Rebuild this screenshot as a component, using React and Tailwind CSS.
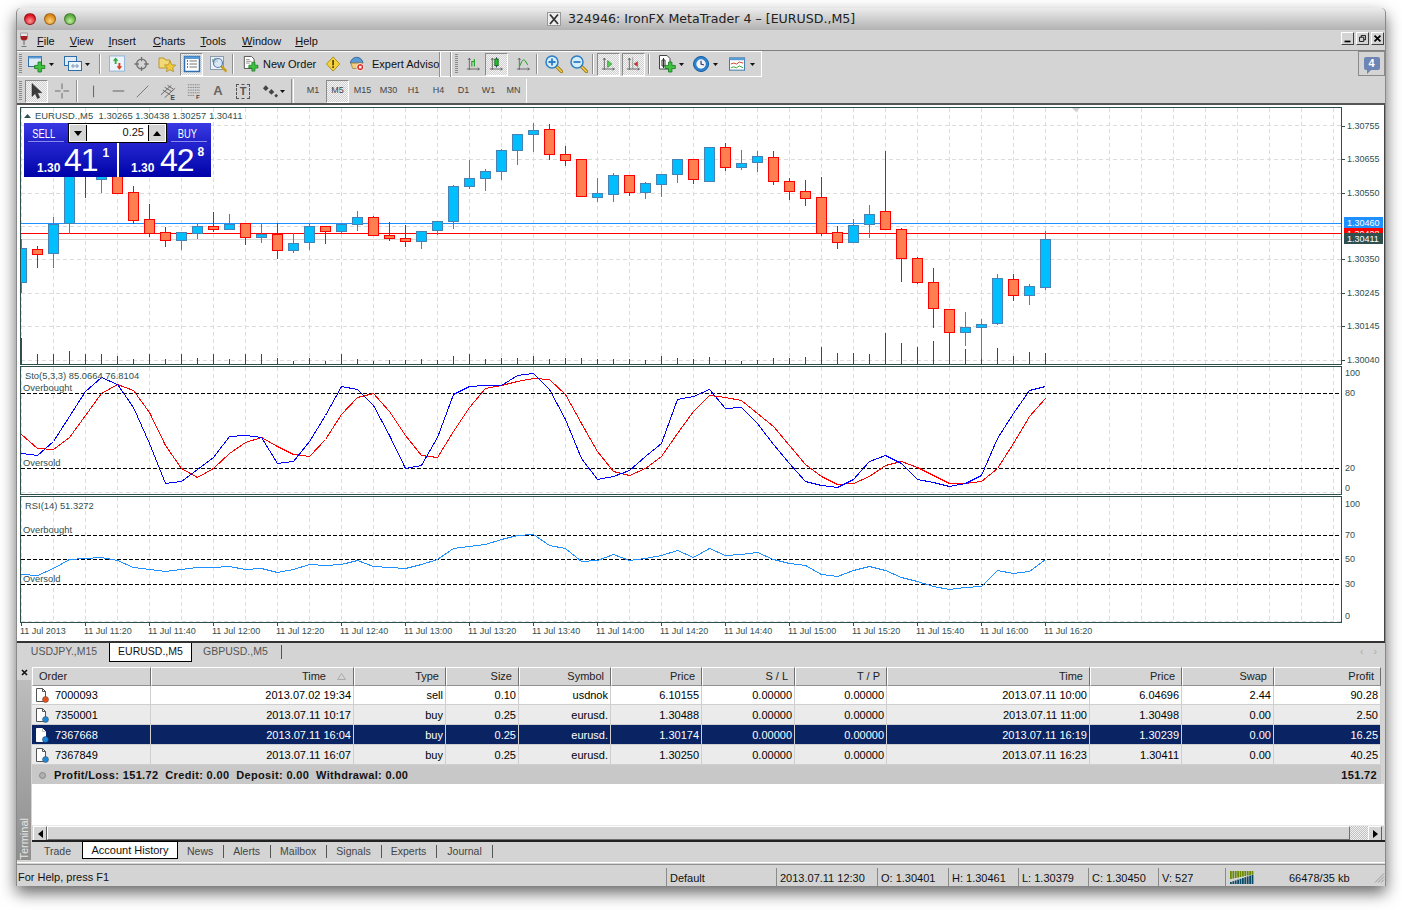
import React from 'react';

// chart data, measured in 3x crop units (y = 105 + z / 3)
const CANDLES = [
  [400, 430, 532, 560, 'b'], [420, 433, 448, 485, 'r'], [333, 357, 445, 485, 'b'], [150, 180, 355, 385, 'b'],
  [170, 180, 210, 275, 'r'], [160, 190, 222, 260, 'b'], [180, 190, 263, 263, 'r'], [240, 262, 346, 355, 'r'],
  [295, 343, 383, 392, 'r'], [363, 382, 406, 422, 'r'], [382, 382, 406, 432, 'b'], [352, 364, 385, 398, 'b'],
  [318, 364, 373, 378, 'r'], [324, 356, 373, 373, 'b'], [355, 355, 397, 418, 'r'], [355, 388, 397, 410, 'b'],
  [352, 388, 436, 458, 'r'], [380, 415, 436, 440, 'b'], [355, 364, 412, 433, 'b'], [360, 364, 379, 413, 'r'],
  [352, 358, 379, 380, 'b'], [316, 337, 358, 375, 'b'], [330, 337, 391, 391, 'r'], [348, 391, 400, 404, 'r'],
  [357, 400, 409, 422, 'r'], [376, 379, 409, 428, 'b'], [345, 349, 376, 386, 'b'], [237, 244, 349, 368, 'b'],
  [163, 220, 244, 250, 'b'], [190, 199, 220, 255, 'b'], [130, 136, 199, 222, 'b'], [88, 88, 136, 177, 'b'],
  [52, 76, 88, 138, 'b'], [55, 73, 148, 162, 'r'], [120, 148, 166, 180, 'r'], [163, 163, 274, 274, 'r'],
  [216, 265, 277, 288, 'b'], [202, 211, 268, 288, 'b'], [211, 211, 262, 270, 'r'], [228, 235, 262, 278, 'b'],
  [208, 208, 238, 272, 'b'], [163, 163, 208, 230, 'b'], [163, 163, 223, 233, 'r'], [123, 127, 227, 227, 'b'],
  [112, 127, 187, 194, 'r'], [132, 175, 187, 191, 'b'], [136, 154, 172, 197, 'b'], [136, 157, 229, 236, 'r'],
  [217, 229, 259, 281, 'r'], [222, 259, 280, 299, 'r'], [213, 277, 385, 389, 'r'], [360, 382, 412, 428, 'r'],
  [340, 361, 412, 412, 'b'], [297, 328, 358, 395, 'b'], [135, 319, 373, 373, 'r'], [367, 373, 460, 527, 'r'],
  [454, 460, 532, 535, 'r'], [487, 532, 610, 665, 'r'], [610, 613, 682, 718, 'r'], [618, 667, 682, 720, 'b'],
  [640, 658, 667, 760, 'b'], [505, 520, 655, 658, 'b'], [505, 523, 571, 585, 'r'], [535, 544, 571, 597, 'b'],
  [375, 403, 547, 553, 'b'],
];

const VOLUMES = [
  695, 745, 745, 735, 745, 745, 750, 760, 745, 760, 745, 755, 745, 760, 745, 745, 755, 765, 755, 765, 745, 760,
  765, 762, 762, 760, 762, 750, 745, 760, 755, 755, 750, 758, 755, 755, 758, 758, 760, 762, 750, 755, 758, 753,
  762, 765, 762, 755, 755, 753, 723, 742, 742, 745, 681, 711, 723, 705, 680, 729, 760, 727, 750, 738, 742,
];

const seg = (a, b, c) => [
  ...a.map(z => 360 + z / 3),
  ...b.map(z => 366 + z / 3),
  ...c.map(z => 366 + z / 3),
];

const STO_MAIN = seg(
  [280, 286, 243, 168, 92, 50, 72, 140, 250, 368, 364, 328, 290, 229, 226, 232, 310, 303, 242, 165, 78, 87, 135, 225],
  [305, 296, 212, 85, 61, 58, 56, 26, 21, 70, 160, 277, 340, 331, 313, 270, 230, 98, 90, 70, 127],
  [124, 172, 235, 290, 345, 357, 364, 338, 285, 268, 290, 340, 348, 360, 350, 326, 215, 140, 72, 61],
);
const STO_SIGNAL = seg(
  [222, 265, 268, 232, 165, 100, 73, 90, 155, 255, 325, 351, 325, 280, 245, 232, 258, 283, 287, 238, 163, 110, 100, 153],
  [208, 268, 272, 195, 122, 66, 57, 45, 35, 40, 83, 170, 256, 316, 328, 307, 270, 200, 135, 86, 93],
  [103, 140, 180, 238, 295, 331, 355, 352, 329, 298, 284, 302, 327, 350, 351, 345, 305, 232, 150, 96],
);
const RSI = seg(
  [643, 646, 625, 596, 595, 592, 600, 622, 628, 633, 628, 622, 622, 619, 628, 625, 637, 628, 613, 616, 611, 601, 619, 622],
  [606, 594, 580, 547, 541, 535, 520, 508, 505, 538, 547, 586, 581, 565, 582, 575, 568, 553, 574, 547, 568],
  [565, 559, 580, 592, 598, 625, 631, 613, 601, 613, 634, 646, 661, 670, 664, 661, 613, 622, 616, 580],
);

const GRID_X = Array.from({ length: 42 }, (_, i) => 21.5 + 32 * i);
const TIMES = ['11 Jul 2013', '11 Jul 11:20', '11 Jul 11:40', '11 Jul 12:00', '11 Jul 12:20', '11 Jul 12:40', '11 Jul 13:00', '11 Jul 13:20', '11 Jul 13:40', '11 Jul 14:00', '11 Jul 14:20', '11 Jul 14:40', '11 Jul 15:00', '11 Jul 15:20', '11 Jul 15:40', '11 Jul 16:00', '11 Jul 16:20'];
const PRICES = [[126, '1.30755'], [159, '1.30655'], [193, '1.30550'], [259, '1.30350'], [293, '1.30245'], [326, '1.30145'], [360, '1.30040']];

const COLS = 'grid grid-cols-[119px_203px_92px_73px_92px_91px_93px_92px_203px_92px_92px_107px]';
const ORDERS = [
  { id: '7000093', open: '2013.07.02 19:34', type: 'sell', size: '0.10', sym: 'usdnok', price: '6.10155', close: '2013.07.11 10:00', cp: '6.04696', swap: '2.44', profit: '90.28', dot: '#e8501a', bg: 'bg-white' },
  { id: '7350001', open: '2013.07.11 10:17', type: 'buy', size: '0.25', sym: 'eurusd.', price: '1.30488', close: '2013.07.11 11:00', cp: '1.30498', swap: '0.00', profit: '2.50', dot: '#1e88d8', bg: 'bg-[#ebebeb]' },
  { id: '7367668', open: '2013.07.11 16:04', type: 'buy', size: '0.25', sym: 'eurusd.', price: '1.30174', close: '2013.07.11 16:19', cp: '1.30239', swap: '0.00', profit: '16.25', dot: '#1e88d8', bg: 'bg-[#0a2463] text-white', sel: true },
  { id: '7367849', open: '2013.07.11 16:07', type: 'buy', size: '0.25', sym: 'eurusd.', price: '1.30250', close: '2013.07.11 16:23', cp: '1.30411', swap: '0.00', profit: '40.25', dot: '#1e88d8', bg: 'bg-[#ebebeb]' },
];

const Ic = ({ className = '', children }) => (
  <svg viewBox="0 0 18 18" className={`block shrink-0 h-[18px] w-[18px] ${className}`}>{children}</svg>
);
const Plus = ({ x = 0, y = 0 }) => (
  <path transform={`translate(${x} ${y})`} d="M9 7h3.4v3.4h3.4v3.2h-3.4V17H9v-3.4H5.6v-3.2H9z" fill="#3fc23f" stroke="#15761c" strokeWidth=".8" />
);
const Axes = () => (
  <path d="M4 2v14M1 15h15M4 2l-1.5 2M4 2l1.5 2M16 15l-2-1.500M16 15l-2 1.500" fill="none" stroke="#555" strokeWidth="1" />
);
const Magnifier = ({ plus }) => (
  <>
    <path d="M11 11l5.500 5.500" stroke="#a07a10" strokeWidth="3.200" strokeLinecap="round" />
    <path d="M11 11l5.500 5.500" stroke="#f0d050" strokeWidth="1.500" strokeLinecap="round" />
    <circle cx="7" cy="7" r="6" fill="#d5ecfb" stroke="#2c7fc4" strokeWidth="1.500" />
    <path d={plus ? 'M3.500 7h7M7 3.500v7' : 'M3.500 7h7'} stroke="#2c7fc4" strokeWidth="1.800" />
  </>
);
const Arrow = ({ className = '' }) => (
  <svg viewBox="0 0 5 3" className={`block shrink-0 h-[3px] w-[5px] ${className}`}><path d="M0 0h5L2.500 3z" fill="#111" /></svg>
);
const Grip = ({ className = '' }) => (
  <div className={`h-[20px] w-[3px] shrink-0 bg-[repeating-linear-gradient(#8a8a8a_0_1px,transparent_1px_2px)] ${className}`} />
);
const Sep = ({ className = '' }) => (
  <div className={`h-[20px] w-[2px] shrink-0 border-l border-r border-l-[#8f8f8f] border-r-white ${className}`} />
);
const PRESSED = 'flex h-[23px] w-[23px] shrink-0 items-center justify-center border border-t-[#8a8a8a] border-l-[#8a8a8a] border-r-white border-b-white bg-[repeating-conic-gradient(#d0d0d0_0_25%,#f4f4f4_0_50%)] bg-size-[2px_2px]';

const TrafficLight = ({ className }) => (
  <div className={`h-[12px] w-[12px] rounded-full border border-black/30 ${className}`} />
);

function TitleBar() {
  return (
    <div className="relative flex h-[22px] shrink-0 items-center rounded-t-[5px] bg-gradient-to-b from-[#ececec] to-[#b2b2b2] pl-[7px]">
      <div className="flex gap-[8px]">
        <TrafficLight className="bg-[radial-gradient(circle_at_50%_70%,#ff9a9a,#d8101c_70%)]" />
        <TrafficLight className="bg-[radial-gradient(circle_at_50%_70%,#ffd27a,#d88412_70%)]" />
        <TrafficLight className="bg-[radial-gradient(circle_at_50%_70%,#c4ee9c,#55a83a_70%)]" />
      </div>
      <svg viewBox="0 0 14 14" className="ml-[471px] block h-[14px] w-[14px] shrink-0">
        <rect x=".5" y=".5" width="13" height="13" fill="#eee" stroke="#999" />
        <path d="M3 2.500l8 9.500M11 2.500l-8 9.500" stroke="#333" strokeWidth="1.800" />
      </svg>
      <div className="ml-[7px] whitespace-nowrap pt-[1px] font-['DejaVu_Sans',sans-serif] text-[12.600px] text-[#222]">324946: IronFX MetaTrader 4 – [EURUSD.,M5]</div>
    </div>
  );
}

const MENU = [['F', 'ile', 'ml-[8px]'], ['V', 'iew', 'ml-[15px]'], ['I', 'nsert', 'ml-[15px]'], ['C', 'harts', 'ml-[17px]'], ['T', 'ools', 'ml-[15px]'], ['W', 'indow', 'ml-[16px]'], ['H', 'elp', 'ml-[14px]']];

function MenuBar() {
  return (
    <div className="flex h-[20px] shrink-0 items-center bg-[#d4d4d4] text-[11px] text-[#111]">
      <svg viewBox="0 0 10 16" className="ml-[2px] block h-[16px] w-[10px] shrink-0">
        <path d="M1.500 1h7v4.500c0 2-1.500 3-3.500 3s-3.500-1-3.500-3z" fill="#e6e6e6" stroke="#888" strokeWidth=".7" />
        <path d="M1.700 4h6.600v1.500c0 2-1.400 2.800-3.300 2.800s-3.300-.8-3.300-2.800z" fill="#a81c20" />
        <path d="M5 8.500V13M2.500 14.500h5" stroke="#777" strokeWidth="1.200" />
      </svg>
      <div className="flex pt-[2px]">
        {MENU.map(([first, rest, ml]) => (
          <span key={first} className={ml}><span className="underline">{first}</span>{rest}</span>
        ))}
      </div>
      <div className="ml-auto mr-[1px] mt-[-3px] flex gap-[2px]">
        {['M3 10h7', 'M3 5h5v5H3zM5 5V3h5v5H8', 'M3 3l7 7M10 3l-7 7'].map((d, i) => (
          <div key={d} className="h-[13px] w-[13px] border border-t-white border-l-white border-r-[#404040] border-b-[#404040] bg-[#d4d4d4]">
            <svg viewBox="0 0 13 13" className="block h-[11px] w-[11px]">
              <path d={d} fill="none" stroke="#000" strokeWidth={i === 1 ? 1 : 2} />
            </svg>
          </div>
        ))}
      </div>
    </div>
  );
}

function ToolbarOne() {
  return (
    <div className="flex h-[27px] shrink-0 border-t border-t-[#808080] bg-[#d4d4d4]">
      <div className="flex h-[26px] w-[745px] shrink-0 items-center border-t border-t-white border-r border-r-white border-b border-b-white text-[11px] text-[#111]">
        <Grip className="ml-[2px]" />
        <Ic className="ml-[6px]">
          <rect x=".5" y="1.500" width="13" height="10" fill="#dfeaf6" stroke="#2f6ea8" />
          <rect x=".5" y="1.500" width="13" height="2" fill="#5b9bd5" />
          <Plus x="1" />
        </Ic>
        <Arrow className="ml-[3px]" />
        <Ic className="ml-[10px]">
          <rect x=".5" y="1.500" width="12" height="9" fill="#dfeaf6" stroke="#2f6ea8" />
          <rect x="4.500" y="6.500" width="13" height="9" fill="#eef4fb" stroke="#2f6ea8" />
          <path d="M7 11h8M9 9v4M13 9v4" stroke="#7a9bc0" />
        </Ic>
        <Arrow className="ml-[3px]" />
        <Sep className="ml-[9px]" />
        <Ic className="ml-[8px] w-[17px]!">
          <rect x=".5" y=".5" width="16" height="16" fill="#eef4fb" stroke="#8fb4d8" />
          <path d="M7 2l3 3.500H8V9H6V5.500H4z" fill="#2fae3a" />
          <path d="M11 15l-3-3.500h2V8h2v3.500h2z" fill="#d83a22" />
        </Ic>
        <Ic className="ml-[8px] w-[16px]!">
          <circle cx="8.500" cy="9" r="5.500" fill="none" stroke="#707070" strokeWidth="1.500" />
          <path d="M8.500 1v5M8.500 12v5M.5 9h5M11.500 9h5" stroke="#707070" strokeWidth="1.500" />
        </Ic>
        <Ic className="ml-[8px]">
          <path d="M1 3h5l1.500 2H12v8H1z" fill="#f3d87a" stroke="#b8962e" />
          <path d="M12 6l1.700 3.700 4 .4-3 2.700.9 4L12 14.700 8.400 16.800l.9-4-3-2.700 4-.4z" fill="#f2c93a" stroke="#a88a20" strokeWidth=".7" />
        </Ic>
        <div className={`ml-[4px] ${PRESSED}`}>
          <Ic>
            <rect x="1.500" y="1.500" width="15" height="15" fill="#fff" stroke="#2c6fb0" strokeWidth="1.500" />
            <rect x="1.500" y="1.500" width="15" height="2.500" fill="#5b9bd5" />
            <path d="M4 6h1M4 9h1M4 12h1" stroke="#1c4f88" strokeWidth="1.500" />
            <path d="M6.500 6H14M6.500 9H14M6.500 12H14" stroke="#777" />
          </Ic>
        </div>
        <Ic className="ml-[7px]">
          <rect x=".5" y="1.500" width="13" height="13" fill="#eef2f6" stroke="#8a9bb0" />
          <path d="M3 4v3M5 3v5M7 4v3" stroke="#466" />
          <path d="M11 11l5.500 5.500" stroke="#c8a020" strokeWidth="2.500" />
          <circle cx="8" cy="8" r="4.500" fill="#cfe4f6" fillOpacity=".7" stroke="#5a7ea8" strokeWidth="1.200" />
        </Ic>
        <Sep className="ml-[4px]" />
        <Ic className="ml-[9px] w-[16px]!">
          <path d="M1.500.5h8l3 3V14h-11z" fill="#fff" stroke="#444" />
          <path d="M3.500 4h4M3.500 6h6M3.500 8h4" stroke="#888" />
          <Plus x="1" />
        </Ic>
        <span className="ml-[4px] w-[52px] shrink-0 whitespace-nowrap">New Order</span>
        <Ic className="ml-[11px] w-[16px]!">
          <path d="M8 1l7.500 8L8 17 .5 9z" fill="#f4d23c" stroke="#a88a18" />
          <rect x="7" y="4.500" width="2" height="6" fill="#5c4a08" />
          <rect x="7" y="11.500" width="2" height="2" fill="#5c4a08" />
        </Ic>
        <Ic className="ml-[8px] w-[16px]!">
          <path d="M.5 8c0-3 3-6.500 7-6.500s7 3.500 7 6.500z" fill="#5b9bd5" stroke="#2c5f90" />
          <path d="M1 8h13l-2 6H3z" fill="#f0d080" stroke="#a88a40" />
          <circle cx="11.500" cy="12.500" r="4" fill="#d8261c" stroke="#fff" />
          <rect x="10" y="11" width="3" height="3" fill="#fff" />
        </Ic>
        <span className="ml-[6px] w-[67px] shrink-0 overflow-hidden whitespace-nowrap">Expert Advisors</span>
        <Sep className="h-[25px]!" />
        <Sep className="ml-[9px] h-[25px]!" />
        <Grip className="ml-[3px]" />
        <Ic className="ml-[8px] w-[15px]!">
          <Axes />
          <path d="M7 12V6h3v6M10 6V3" fill="none" stroke="#18a018" strokeWidth="1.300" />
        </Ic>
        <div className={`ml-[4px] ${PRESSED}`}>
          <Ic className="w-[15px]!">
            <Axes />
            <path d="M9 1v12" stroke="#116" />
            <rect x="7" y="3" width="4" height="8" fill="#22c02a" stroke="#0c6010" />
          </Ic>
        </div>
        <Ic className="ml-[8px] w-[15px]!">
          <Axes />
          <path d="M5 11c2-7 4-8 6-6l3 5" fill="none" stroke="#18a018" strokeWidth="1.200" />
        </Ic>
        <Sep className="ml-[5px]" />
        <Ic className="ml-[7px]"><Magnifier plus /></Ic>
        <Ic className="ml-[7px]"><Magnifier /></Ic>
        <Sep className="ml-[4px]" />
        <div className={`ml-[3px] ${PRESSED}`}>
          <Ic className="w-[15px]!">
            <Axes />
            <path d="M8 5l5 4-5 4z" fill="#5ad05a" stroke="#108a18" strokeWidth=".8" />
          </Ic>
        </div>
        <div className={`ml-[2px] ${PRESSED}`}>
          <Ic className="w-[15px]!">
            <Axes />
            <path d="M8 1v14M9.500 9L14 6v6z" fill="#d82a1c" stroke="#666" strokeWidth=".6" />
          </Ic>
        </div>
        <Sep className="ml-[3px]" />
        <Ic className="ml-[8px]">
          <path d="M1.500.5H9l3 3V14H1.500z" fill="#fff" stroke="#444" />
          <path d="M4 5h3v6H4zM5.500 3v10" fill="none" stroke="#333" />
          <Plus x="1.500" />
        </Ic>
        <Arrow className="ml-[3px]" />
        <Ic className="ml-[9px] w-[17px]!">
          <circle cx="8.500" cy="9" r="8" fill="#2a82d0" stroke="#155a9c" />
          <circle cx="8.500" cy="9" r="5" fill="#f2f6fa" />
          <path d="M8.500 5.500V9l3 1" fill="none" stroke="#334" strokeWidth="1.200" />
        </Ic>
        <Arrow className="ml-[3px]" />
        <Ic className="ml-[11px] w-[17px]!">
          <rect x=".5" y="2.500" width="16" height="13" fill="#fff" stroke="#3a72aa" />
          <rect x=".5" y="2.500" width="16" height="2.500" fill="#5b9bd5" />
          <path d="M2 9l3-1 3 1 3-2 4 1" fill="none" stroke="#c83a20" />
          <path d="M2 13l3-1 3 1 3-2 4 2" fill="none" stroke="#30a030" />
        </Ic>
        <Arrow className="ml-[4px]" />
      </div>
      <div className="ml-auto flex h-[25px] w-[27px] items-center justify-center border border-[#8a8a8a]">
        <div className="relative flex h-[13px] w-[16px] items-center justify-center rounded-[2px] bg-[#6d84b4] text-[11px] font-bold leading-none text-white">
          4
          <div className="absolute left-[3px] top-[13px] h-0 w-0 border-t-[4px] border-r-[4px] border-t-[#6d84b4] border-r-transparent" />
        </div>
      </div>
    </div>
  );
}

const PERIODS = [
  ['M1', 'w-[26px]'], ['M5', 'w-[23px]'], ['M15', 'w-[27px]'], ['M30', 'w-[25px]'], ['H1', 'w-[25px]'],
  ['H4', 'w-[25px]'], ['D1', 'w-[25px]'], ['W1', 'w-[25px]'], ['MN', 'w-[25px]'],
];

function ToolbarTwo() {
  return (
    <div className="flex h-[26px] shrink-0 items-center bg-[#d4d4d4] pt-[2px] text-[9px] text-[#444]">
      <Grip className="ml-[2px]" />
      <div className={`ml-[3px] ${PRESSED}`}>
        <Ic><path d="M4 1.500v13l3.200-3 2.300 5 2.200-1-2.300-4.800h4.400z" fill="#3c3c3c" stroke="#222" strokeWidth=".5" /></Ic>
      </div>
      <Ic className="ml-[6px] w-[17px]!"><path d="M8.500 1v6M8.500 11v6M1 9h6M10 9h6" stroke="#666" /></Ic>
      <Sep className="ml-[5px] h-[22px]!" />
      <Ic className="ml-[8px] w-[16px]!"><path d="M8.500 3v13" stroke="#555" /></Ic>
      <Ic className="ml-[8px] w-[16px]!"><path d="M3 9h13" stroke="#555" /></Ic>
      <Ic className="ml-[9px] w-[16px]!"><path d="M2 16L15 3" stroke="#777" strokeWidth="1.100" /></Ic>
      <Ic className="ml-[9px] w-[17px]!">
        <path d="M1 13L12 3M5 16L16 6M3 8l8 5M5 5l8 5M8 3l6 4" stroke="#666" />
        <text x="11" y="18" className="fill-[#444] text-[7px] font-bold">E</text>
      </Ic>
      <Ic className="ml-[10px] w-[16px]!">
        <path d="M1 2h14M1 5h14M1 8h14M1 11h14M1 14h8" stroke="#666" strokeDasharray="1 1" />
        <text x="10" y="18" className="fill-[#444] text-[7px] font-bold">F</text>
      </Ic>
      <span className="ml-[7px] w-[16px] shrink-0 text-center text-[13px] font-bold text-[#666]">A</span>
      <div className="ml-[10px] flex h-[15px] w-[14px] shrink-0 items-center justify-center border border-dashed border-[#555] text-[11px] font-bold text-[#555]">T</div>
      <Ic className="ml-[12px] w-[17px]!">
        <path d="M4 3l3 3-3 3-3-3zM10 7l3 3-3 3-3-3zM5 11h2M13 14l2 2 2-2-2-2z" fill="#444" />
      </Ic>
      <Arrow className="ml-[1px]" />
      <Sep className="ml-[6px] h-[24px]! w-[3px]!" />
      <div className="ml-[6px] flex items-center">
        {PERIODS.map(([p, w]) => (
          <div key={p} className={p === 'M5' ? `${PRESSED} ${w}` : `${w} shrink-0 text-center`}>{p}</div>
        ))}
      </div>
      <div className="h-[24px] w-[1px] bg-white" />
    </div>
  );
}

const yz = z => Math.round(105 + z / 3) + 0.5;

function Grid({ top, bottom, rows = [] }) {
  return (
    <g stroke="#dcdcdc" strokeDasharray="4 3" shapeRendering="crispEdges">
      {GRID_X.map(x => <line key={x} x1={x} x2={x} y1={top} y2={bottom} />)}
      {rows.map(y => <line key={y} x1="21" x2="1341" y1={y} y2={y} />)}
    </g>
  );
}

const TXT = 'fill-[#2f4f4f] text-[9px]';
const LEGEND = 'fill-[#2f4f4f] text-[9.400px]';
const points = arr => arr.map((y, i) => `${21.5 + 16 * i},${Math.round(y) + 0.5}`).join(' ');

function MainChart() {
  return (
    <svg viewBox="17 105 1367 260" className="block h-[260px] w-[1367px] bg-white">
      <Grid top={108} bottom={364} rows={[125.5, 159.5, 193.5, 226.5, 259.5, 293.5, 326.5, 360.5]} />
      <line x1="21" x2="1341" y1="239.5" y2="239.5" stroke="#d8d8d8" shapeRendering="crispEdges" />
      <line x1="21" x2="1341" y1="223.5" y2="223.5" stroke="#1e90ff" shapeRendering="crispEdges" />
      <line x1="21" x2="1341" y1="233.5" y2="233.5" stroke="#ff0000" shapeRendering="crispEdges" />
      <g shapeRendering="crispEdges">
        {VOLUMES.map((z, i) => (
          <line key={i} x1={21.5 + 16 * i} x2={21.5 + 16 * i} y1={yz(z)} y2="364" stroke="#2f4f4f" />
        ))}
        {CANDLES.map(([wt, bt, bb, wb, kind], i) => {
          const x = 21.5 + 16 * i;
          const stroke = kind === 'b' ? '#4682b4' : '#ff0000';
          return (
            <g key={i}>
              <line x1={x} x2={x} y1={yz(wt)} y2={yz(wb)} stroke={stroke} />
              <rect x={x - 5} y={yz(bt)} width="10" height={yz(bb) - yz(bt)} fill={kind === 'b' ? '#00bfff' : '#ff7f50'} stroke={stroke} />
            </g>
          );
        })}
      </g>
      <rect x="17" y="105" width="3.500" height="260" fill="#fff" />
      <rect x="20.500" y="107.500" width="1321" height="257" fill="none" stroke="#2f4f4f" shapeRendering="crispEdges" />
      <path d="M1072 108h8l-4 4z" fill="#d0d0d0" />
      <path d="M24 118l3.500-4 3.500 4z" fill="#2f4f4f" />
      <text x="35" y="119" className={`${LEGEND} tracking-[0.04px]`} xmlSpace="preserve">EURUSD.,M5  1.30265 1.30438 1.30257 1.30411</text>
      {PRICES.map(([y, p]) => (
        <g key={p}>
          <line x1="1342" x2="1345" y1={y + 0.5} y2={y + 0.5} stroke="#2f4f4f" />
          <text x="1347" y={y + 3} className={TXT}>{p}</text>
        </g>
      ))}
      <rect x="1344" y="217" width="39" height="11" fill="#1e90ff" />
      <text x="1347" y="226" className="fill-white text-[9px]">1.30460</text>
      <rect x="1344" y="228" width="39" height="5" fill="#ff0000" />
      <text x="1347" y="237" className="fill-white text-[9px]">1.30428</text>
      <rect x="1344" y="233" width="39" height="11" fill="#2f4f4f" />
      <text x="1347" y="242" className="fill-white text-[9px]">1.30411</text>
    </svg>
  );
}

const Level = ({ y }) => (
  <line x1="21" x2="1341" y1={y} y2={y} stroke="#000" strokeDasharray="4 2" shapeRendering="crispEdges" />
);

function StoPanel() {
  return (
    <svg viewBox="17 365 1367 130" className="block h-[130px] w-[1367px] bg-white">
      <Grid top={367} bottom={494} rows={[492.5]} />
      <Level y={393.5} />
      <Level y={468.5} />
      <polyline points={points(STO_SIGNAL)} fill="none" stroke="#ff0000" shapeRendering="crispEdges" />
      <polyline points={points(STO_MAIN)} fill="none" stroke="#0000ff" shapeRendering="crispEdges" />
      <rect x="20.500" y="366.500" width="1321" height="128" fill="none" stroke="#2f4f4f" shapeRendering="crispEdges" />
      <text x="25" y="379" className={LEGEND}>Sto(5,3,3) 85.0664 76.8104</text>
      <text x="23" y="391" className={LEGEND}>Overbought</text>
      <text x="23" y="466" className={LEGEND}>Oversold</text>
      {[[376, '100'], [396, '80'], [471, '20'], [491, '0']].map(([y, t]) => (
        <text key={t} x="1345" y={y} className={TXT}>{t}</text>
      ))}
    </svg>
  );
}

function RsiPanel() {
  return (
    <svg viewBox="17 495 1367 128" className="block h-[128px] w-[1367px] bg-white">
      <Grid top={497} bottom={622} rows={[621.5]} />
      <Level y={535.5} />
      <Level y={559.5} />
      <Level y={584.5} />
      <polyline points={points(RSI)} fill="none" stroke="#1e90ff" shapeRendering="crispEdges" />
      <rect x="20.500" y="496.500" width="1321" height="126" fill="none" stroke="#2f4f4f" shapeRendering="crispEdges" />
      <text x="25" y="509" className={LEGEND}>RSI(14) 51.3272</text>
      <text x="23" y="533" className={LEGEND}>Overbought</text>
      <text x="23" y="582" className={LEGEND}>Oversold</text>
      {[[507, '100'], [538, '70'], [562, '50'], [587, '30'], [619, '0']].map(([y, t]) => (
        <text key={t} x="1345" y={y} className={TXT}>{t}</text>
      ))}
    </svg>
  );
}

function TimeAxis() {
  return (
    <div className="flex h-[18px] shrink-0 bg-white pl-[4px] text-[9px] text-[#2f4f4f]">
      {TIMES.map(t => (
        <div key={t} className="w-[64px] shrink-0">
          <div className="h-[3px] w-px bg-[#2f4f4f]" />
          <div className="-ml-px whitespace-nowrap leading-[11px]">{t}</div>
        </div>
      ))}
    </div>
  );
}

function ChartTabs() {
  return (
    <div className="flex h-[23px] shrink-0 items-start border-t-2 border-t-[#333] bg-[#d4d4d4] text-[10.500px] text-[#555]">
      <div className="w-[92px] pl-[2px] pt-[1px] text-center">USDJPY.,M15</div>
      <div className="h-[19px] w-[83px] border-r border-b border-l border-black bg-white pt-[1px] text-center text-[#111]">EURUSD.,M5</div>
      <div className="ml-[11px] pt-[1px]">GBPUSD.,M5</div>
      <div className="ml-[13px] mt-[2px] h-[14px] w-px bg-[#555]" />
      <div className="ml-auto mr-[8px] flex gap-[10px] pt-[1px] text-[#aaa]">
        <span>‹</span>
        <span>›</span>
      </div>
    </div>
  );
}

function DocIcon({ dot, sel }) {
  return (
    <svg viewBox="0 0 14 15" className="block h-[15px] w-[14px] shrink-0">
      <path d="M1.500.5h6l3 3v10h-9z" fill="#fff" stroke={sel ? '#fff' : '#555'} />
      <path d="M7.500.5v3h3" fill="none" stroke={sel ? '#bbb' : '#555'} />
      <circle cx="10.500" cy="11.500" r="3" fill={dot} stroke={sel ? '#0a2463' : '#444'} strokeWidth=".5" />
    </svg>
  );
}

const HEAD = ['Order', 'Time', 'Type', 'Size', 'Symbol', 'Price', 'S / L', 'T / P', 'Time', 'Price', 'Swap', 'Profit'];

function OrdersTable() {
  return (
    <div className="w-[1349px] shrink-0">
      <div className={`${COLS} h-[18px] text-[11px] text-[#222]`}>
        {HEAD.map((h, i) => (
          <div
            key={i}
            className={`relative border border-t-white border-l-white border-r-[#707070] border-b-[#909090] bg-[#d4d4d4] leading-[17px] ${i === 0 ? 'pl-[6px]' : i === 1 ? 'pr-[27px] text-right' : 'pr-[6px] text-right'}`}
          >
            {h}
            {i === 1 && (
              <svg viewBox="0 0 9 7" className="absolute right-[7px] top-[5px] block h-[7px] w-[9px]">
                <path d="M4.500 .5l4 6h-8z" fill="none" stroke="#aaa" />
              </svg>
            )}
          </div>
        ))}
      </div>
      {ORDERS.map(o => {
        const vals = [o.open, o.type, o.size, o.sym, o.price, '0.00000', '0.00000', o.close, o.cp, o.swap, o.profit];
        return (
          <div key={o.id} className={`${COLS} h-[20px] border-b border-b-[#cfcfcf] text-[11px] leading-[21px] ${o.bg}`}>
            <div className="flex items-center gap-[6px] border-r border-r-[#cfcfcf] pl-[3px]">
              <DocIcon dot={o.dot} sel={o.sel} />
              {o.id}
            </div>
            {vals.map((v, i) => (
              <div key={i} className="border-r border-r-[#cfcfcf] pr-[2px] text-right">{v}</div>
            ))}
          </div>
        );
      })}
      <div className="flex h-[19px] items-center justify-between bg-[#c8c8c8] pl-[7px] pr-[4px] pt-[1px] text-[11px] font-bold tracking-[0.35px] text-[#111]">
        <div className="flex items-center gap-[8px] whitespace-pre">
          <div className="h-[7px] w-[7px] rounded-full border border-[#888] bg-[#b0b0b0]" />
          <span>Profit/Loss: 151.72  Credit: 0.00  Deposit: 0.00  Withdrawal: 0.00</span>
        </div>
        <span>151.72</span>
      </div>
    </div>
  );
}

const ScrollBtn = ({ d }) => (
  <div className="flex h-[15px] w-[14px] shrink-0 items-center justify-center border border-t-white border-l-white border-r-[#606060] border-b-[#606060] bg-[#d4d4d4]">
    <svg viewBox="0 0 5 8" className="block h-[8px] w-[5px]"><path d={d} fill="#000" /></svg>
  </div>
);

function BottomTabs() {
  const tabs = [['News', 'ml-[9px]'], ['Alerts', 'ml-[9px]'], ['Mailbox', 'ml-[9px]'], ['Signals', 'ml-[9px]'], ['Experts', 'ml-[9px]'], ['Journal', 'ml-[10px]']];
  return (
    <div className="flex h-[22px] shrink-0 items-start border-t-2 border-t-[#222] bg-[#d4d4d4] text-[10.500px] text-[#444]">
      <div className="ml-[12px] w-[38px] pt-[2px]">Trade</div>
      <div className="-mt-[1px] h-[18px] w-[96px] border border-black bg-white text-center text-[11px] leading-[16px] text-[#111]">Account History</div>
      {tabs.map(([t, ml]) => (
        <React.Fragment key={t}>
          <div className={`${ml} pt-[2px]`}>{t}</div>
          <div className="ml-[10px] mt-[3px] h-[13px] w-px bg-[#555]" />
        </React.Fragment>
      ))}
    </div>
  );
}

function Terminal() {
  return (
    <div className="flex h-[198px] shrink-0 bg-[#d4d4d4]">
      <div className="flex w-[14px] shrink-0 flex-col">
        <div className="flex h-[16px] shrink-0 items-center justify-center">
          <svg viewBox="0 0 7 7" className="block h-[7px] w-[7px]"><path d="M1 1l5 5M6 1L1 6" stroke="#111" strokeWidth="1.600" /></svg>
        </div>
        <div className="flex flex-1 items-end justify-center overflow-hidden border-b-2 border-b-[#d4d4d4] bg-gradient-to-b from-[#bdbdbd] to-[#8e8e8e]">
          <div className="rotate-180 whitespace-nowrap text-[11px] leading-[14px] text-[#e4e4e4] [writing-mode:vertical-rl]">Terminal</div>
        </div>
      </div>
      <div className="ml-[1px] flex flex-1 flex-col overflow-hidden">
        <div className="h-[3px] shrink-0" />
        <OrdersTable />
        <div className="w-[1352px] flex-1 bg-white" />
        <div className="flex h-[15px] shrink-0 items-stretch border-t border-t-[#e8e8e8] bg-[#d4d4d4] pl-[1px] pr-[3px]">
          <ScrollBtn d="M5 0v8L0 4z" />
          <div className="flex-1 border border-t-white border-l-white border-r-[#707070] border-b-[#707070]" />
          <div className="w-[18px] shrink-0 bg-[repeating-conic-gradient(#c0c0c0_0_25%,#f0f0f0_0_50%)] bg-size-[2px_2px]" />
          <ScrollBtn d="M0 0v8l5-4z" />
        </div>
        <BottomTabs />
      </div>
    </div>
  );
}

function StatusBar() {
  const cells = [
    ['Default', 'w-[110px]'], ['2013.07.11 12:30', 'w-[101px]'], ['O: 1.30401', 'w-[71px]'], ['H: 1.30461', 'w-[70px]'],
    ['L: 1.30379', 'w-[70px]'], ['C: 1.30450', 'w-[70px]'], ['V: 527', 'w-[67px]'],
  ];
  return (
    <div className="flex h-[24px] shrink-0 flex-col bg-[#d4d4d4] text-[11px] text-[#111]">
      <div className="h-[3px] shrink-0 border-t border-b border-t-white border-b-[#909090]" />
      <div className="flex flex-1 items-center pt-[3px]">
        <div className="w-[649px] shrink-0 pl-[1px] pt-[1px]">For Help, press F1</div>
        {cells.map(([t, w]) => (
          <div key={t} className={`${w} h-[18px] shrink-0 border-l border-l-[#8a8a8a] pl-[3px] leading-[20px]`}>{t}</div>
        ))}
        <div className="flex h-[18px] w-[147px] shrink-0 items-center border-l border-l-[#8a8a8a] pl-[4px]">
          <svg viewBox="0 0 24 13" className="block h-[13px] w-[24px] shrink-0">
            {Array.from({ length: 10 }, (_, i) => (
              <g key={i}>
                <rect x={i * 2.400} y="0" width="1.800" height={8 - i * 0.5} fill="#6b8a00" />
                <rect x={i * 2.400} y={11 - i * 0.8} width="1.800" height={2 + i * 0.8} fill="#0a4a66" />
              </g>
            ))}
          </svg>
          <span className="ml-[35px] whitespace-nowrap pt-[2px]">66478/35 kb</span>
        </div>
        <svg viewBox="0 0 13 13" className="ml-auto block h-[18px] w-[13px] shrink-0 self-end">
          <path d="M12 3L3 12M12 6l-6 6M12 9l-3 3" stroke="#9a9a9a" />
        </svg>
      </div>
    </div>
  );
}

const SideLabel = ({ children }) => (
  <div className="bg-gradient-to-b from-[#3a3ae6] to-[#2020c8] px-[4px] pt-[4px] text-center text-[12px] leading-[14px]">
    <div className="border-b border-b-[#8a8af0]">
      <span className="inline-block -translate-x-[2px] scale-x-[0.78]">{children}</span>
    </div>
  </div>
);

export default function App() {
  return (
    <div className="h-[910px] w-[1402px] overflow-hidden bg-white pl-[16px] pt-[8px] font-['Liberation_Sans',Arial,sans-serif]">
      <div className="flex h-[878px] w-[1370px] flex-col rounded-t-[5px] border-x border-x-[#8a8a8a] bg-[#d4d4d4] shadow-[0_7px_16px_rgba(0,0,0,0.6)]">
        <TitleBar />
        <MenuBar />
        <ToolbarOne />
        <ToolbarTwo />
        <div className="h-[2px] shrink-0 bg-[#555]" />
        <div className="relative shrink-0 border-r border-r-[#444] bg-white">
          <MainChart />
          <StoPanel />
          <RsiPanel />
          <TimeAxis />
          {/* one click trading panel lies over the chart */}
          <div className="absolute left-[7px] top-[18px] grid w-[187px] grid-cols-[44px_49px_2px_48px_44px] grid-rows-[20px_34px] text-white">
            <SideLabel>SELL</SideLabel>
            <div className="col-span-3 flex h-[20px] items-stretch border-2 border-white bg-white outline outline-1 -outline-offset-1 outline-black">
              <div className="flex w-[17px] items-center justify-center border-r border-r-black bg-[#d4d4d4]">
                <svg viewBox="0 0 8 5" className="block h-[5px] w-[8px]"><path d="M0 0h8L4 5z" fill="#000" /></svg>
              </div>
              <div className="flex-1 pr-[4px] text-right text-[11px] leading-[15px] text-[#111]">0.25</div>
              <div className="flex w-[17px] items-center justify-center border-l border-l-black bg-[#d4d4d4]">
                <svg viewBox="0 0 8 5" className="block h-[5px] w-[8px]"><path d="M0 5h8L4 0z" fill="#000" /></svg>
              </div>
            </div>
            <SideLabel>BUY</SideLabel>
            <div className="col-span-2 flex items-start bg-gradient-to-b from-[#2424d0] to-[#0000a8] pl-[13px]">
              <span className="mt-[18px] w-[27px] text-[12px] font-bold leading-[14px]">1.30</span>
              <span className="text-[32px] leading-[35px] tracking-[-1px]">41</span>
              <span className="ml-[5px] mt-[3px] text-[12px] font-bold leading-[14px]">1</span>
            </div>
            <div className="bg-white" />
            <div className="col-span-2 flex items-start bg-gradient-to-b from-[#2424d0] to-[#0000a8] pl-[12px]">
              <span className="mt-[18px] w-[29px] text-[12px] font-bold leading-[14px]">1.30</span>
              <span className="text-[32px] leading-[35px] tracking-[-1px]">42</span>
              <span className="ml-[4px] mt-[2px] text-[12px] font-bold leading-[14px]">8</span>
            </div>
          </div>
        </div>
        <ChartTabs />
        <Terminal />
        <StatusBar />
      </div>
    </div>
  );
}
